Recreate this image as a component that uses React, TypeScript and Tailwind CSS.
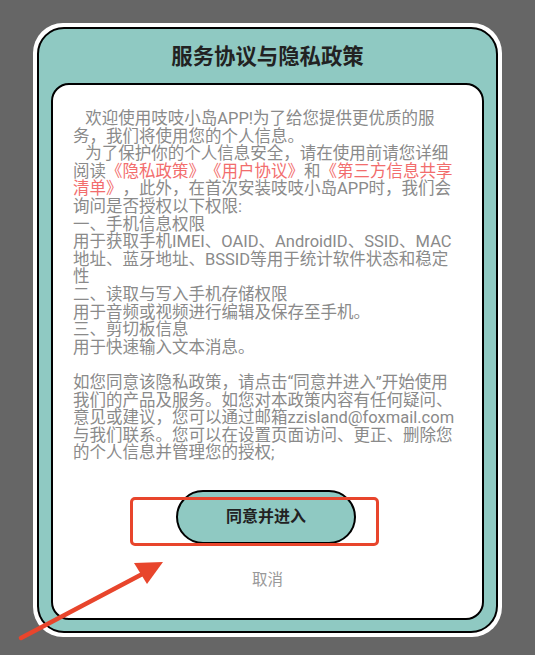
import React from "react";

const body = { fontFamily: 'Roboto, "Noto Sans CJK SC", sans-serif' };

function Link({ children }: { children: React.ReactNode }) {
    return <span className="text-[#f26d6d]">{children}</span>;
}

export default function App() {
    return (
        <div className="relative h-[655px] w-[535px] overflow-hidden bg-[#666666]" style={body}>
            <div className="ml-[33px] pt-[23px]">
                <div className="h-[614px] w-[469px] rounded-[30px] bg-white p-[4px]">
                    <div className="flex h-full flex-col rounded-[27px] border-2 border-black bg-[#8fc9c2]">
                        <h1 className="flex h-[54px] items-center justify-center pt-[2px] text-[21.4px] font-bold text-[#222222]">
                            服务协议与隐私政策
                        </h1>
                        <div className="mx-[12px] mb-[11px] flex flex-1 flex-col rounded-[18px] border-2 border-black bg-white">
                            <p className="whitespace-pre px-5 pt-[25px] text-[16.5px] leading-[17.6px] text-[#8a8a8a] [text-spacing-trim:space-all]">
                                {"   欢迎使用吱吱小岛APP!为了给您提供更优质的服"}<br />
                                务，我们将使用您的个人信息。<br />
                                {"   为了保护你的个人信息安全，请在使用前请您详细"}<br />
                                阅读<Link>《隐私政策》《用户协议》</Link>和<Link>《第三方信息共享</Link><br />
                                <Link>清单》</Link>，此外，在首次安装吱吱小岛APP时，我们会<br />
                                询问是否授权以下权限:<br />
                                一、手机信息权限<br />
                                用于获取手机IMEI、OAID、AndroidID、SSID、MAC<br />
                                地址、蓝牙地址、BSSID等用于统计软件状态和稳定<br />
                                性<br />
                                二、读取与写入手机存储权限<br />
                                用于音频或视频进行编辑及保存至手机。<br />
                                三、剪切板信息<br />
                                用于快速输入文本消息。<br />
                                <br />
                                如您同意该隐私政策，请点击“同意并进入”开始使用<br />
                                我们的产品及服务。如您对本政策内容有任何疑问、<br />
                                意见或建议，您可以通过邮箱zzisland@foxmail.com<br />
                                与我们联系。您可以在设置页面访问、更正、删除您<br />
                                的个人信息并管理您的授权;
                            </p>
                            <div className="mt-auto flex flex-col items-center pb-[28px]">
                                <button className="ml-[-3px] h-[54px] w-[180px] rounded-full border-2 border-black bg-[#8fc9c2] text-[16px] font-bold text-[#222222]">
                                    同意并进入
                                </button>
                                <span className="mt-[26px] text-[15.5px] leading-[20px] text-[#999999]">取消</span>
                            </div>
                        </div>
                    </div>
                </div>
            </div>

            {/* annotation */}
            <div className="absolute left-[130px] top-[497px] h-[49px] w-[249px] rounded-[5px] border-[3px] border-[#e8452c]" />
            <svg className="absolute left-0 top-0" width="535" height="655" viewBox="0 0 535 655">
                <line x1="21" y1="638" x2="150" y2="570" stroke="#e8452c" strokeWidth="4.5" strokeLinecap="round" />
                <polygon points="163,562 134,563 147,584" fill="#e8452c" />
            </svg>
        </div>
    );
}
